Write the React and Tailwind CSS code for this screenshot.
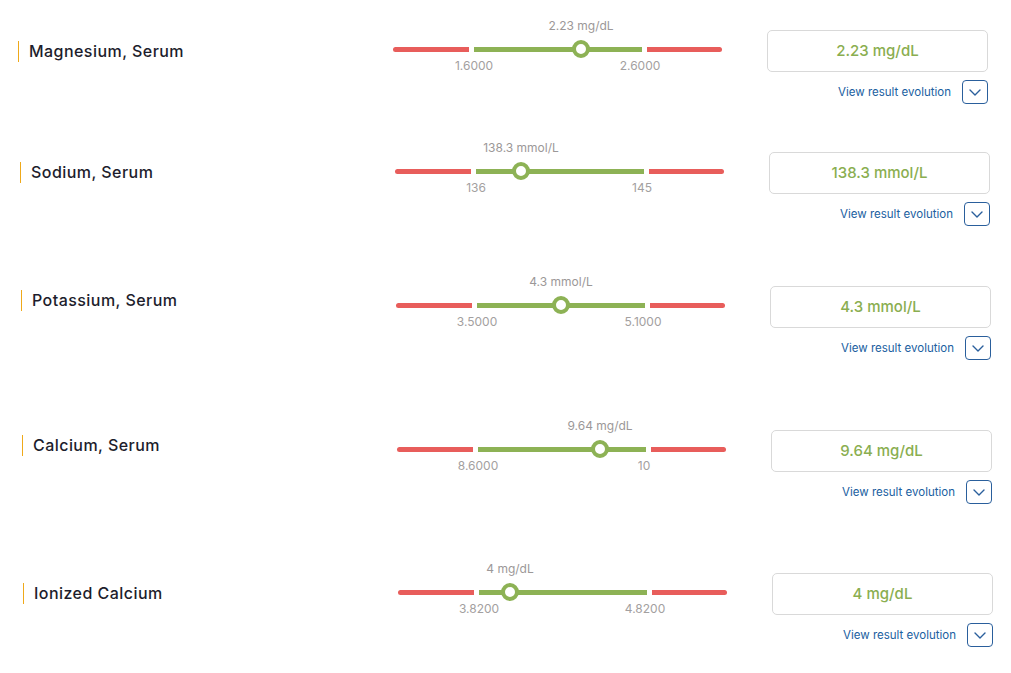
import React from "react";

const rows = [
  { name: "Magnesium, Serum", value: "2.23 mg/dL", knob: 107, minL: "1.6000", maxL: "2.6000", rowCls: "pl-[18px] mt-[30px]", labelCls: "mt-[11px]" },
  { name: "Sodium, Serum", value: "138.3 mmol/L", knob: 45, minL: "136", maxL: "145", rowCls: "pl-[20px] mt-[48px]", labelCls: "mt-[10px]" },
  { name: "Potassium, Serum", value: "4.3 mmol/L", knob: 84, minL: "3.5000", maxL: "5.1000", rowCls: "pl-[21px] mt-[60px]", labelCls: "mt-[4px]" },
  { name: "Calcium, Serum", value: "9.64 mg/dL", knob: 122, minL: "8.6000", maxL: "10", rowCls: "pl-[22px] mt-[70px]", labelCls: "mt-[5px]" },
  { name: "Ionized Calcium", value: "4 mg/dL", knob: 31, minL: "3.8200", maxL: "4.8200", rowCls: "pl-[23px] mt-[69px]", labelCls: "mt-[10px]" },
];

const GREEN_START = 81; // 76 red + 5 gap
const GREEN_END = 249; // + 168

function Slider({ r }) {
  const knobX = GREEN_START + r.knob;
  return (
    <div className="w-[329px] mt-[-13px] shrink-0">
      <div className="relative h-[17px]">
        <span
          className="absolute top-0 -translate-x-1/2 whitespace-nowrap text-[12px] leading-[17px] text-[#9c9898]"
          style={{ left: knobX }}
        >
          {r.value}
        </span>
      </div>
      <div className="relative mt-[6px] h-[18px] flex items-center">
        <div className="h-[5px] w-[76px] rounded-l-full bg-[#e85d5b]" />
        <div className="h-[5px] w-[168px] ml-[5px] bg-[#8db255]" />
        <div className="h-[5px] w-[75px] ml-[5px] rounded-r-full bg-[#e85d5b]" />
        <div
          className="absolute top-0 -translate-x-1/2 w-[18px] h-[18px] rounded-full border-[4px] border-[#8db255] bg-white"
          style={{ left: knobX }}
        />
      </div>
      <div className="relative h-[16px]">
        <span
          className="absolute top-0 -translate-x-1/2 whitespace-nowrap text-[12px] leading-[16px] text-[#a3a0a0]"
          style={{ left: GREEN_START }}
        >
          {r.minL}
        </span>
        <span
          className="absolute top-0 -translate-x-1/2 whitespace-nowrap text-[12px] leading-[16px] text-[#a3a0a0]"
          style={{ left: GREEN_END - 2 }}
        >
          {r.maxL}
        </span>
      </div>
    </div>
  );
}

function Row({ r }) {
  return (
    <div className={`flex items-start ${r.rowCls}`}>
      <div className={`w-[375px] shrink-0 ${r.labelCls}`}>
        <div className="h-[21px] border-l border-[#efa91a] pl-[10px] pb-[2px] flex items-center">
          <span className="text-[16px] font-medium text-[#1d1d2c] tracking-[0.45px] whitespace-nowrap">
            {r.name}
          </span>
        </div>
      </div>
      <Slider r={r} />
      <div className="ml-[45px] w-[221px] shrink-0">
        <div className="h-[42px] rounded-[5px] border border-[#d9d9d9] flex items-center justify-center">
          <span className="text-[15px] font-medium text-[#8aae50]">{r.value}</span>
        </div>
        <div className="mt-[8px] flex items-center justify-end">
          <span className="pt-[2px] text-[11.5px] text-[#20609f] whitespace-nowrap">View result evolution</span>
          <button className="ml-[11px] w-[26px] h-[24px] rounded-[4px] border-[1.5px] border-[#2a5f9c] flex items-center justify-center bg-white">
            <svg width="12" height="7" viewBox="0 0 12 7" fill="none">
              <path d="M1 1L6 6L11 1" stroke="#2a5f9c" strokeWidth="1.4" strokeLinecap="round" strokeLinejoin="round" />
            </svg>
          </button>
        </div>
      </div>
    </div>
  );
}

export default function App() {
  return (
    <div
      className="w-[1011px] h-[673px] bg-white overflow-hidden"
      style={{ fontFamily: "Inter, 'Open Sans', sans-serif" }}
    >
      <div className="flex flex-col">
        {rows.map((r) => (
          <Row key={r.name} r={r} />
        ))}
      </div>
    </div>
  );
}
